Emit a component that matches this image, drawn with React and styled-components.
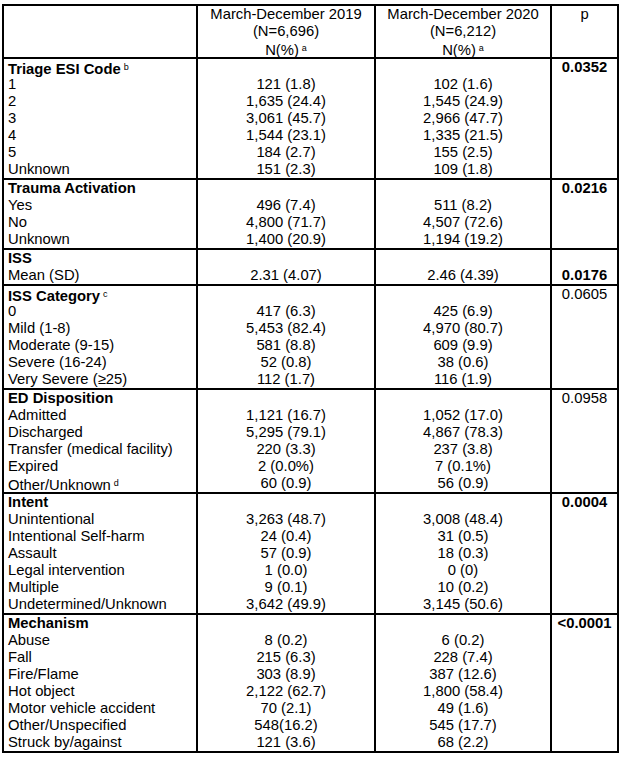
import styled, { createGlobalStyle } from "styled-components";

const GlobalStyle = createGlobalStyle`
  html, body {
    margin: 0;
    padding: 0;
    background: #fff;
  }
  body {
    font-family: "Liberation Sans", Arial, sans-serif;
    color: #000;
  }
`;

const Table = styled.div`
  display: grid;
  grid-template-columns: 194px 178px 176px 67px;
  margin: 4px 0 0 2px;
  border-left: 2px solid #000;
  border-top: 2px solid #000;
  width: max-content;
  font-size: 14.8px;
  line-height: 17px;
`;

const Cell = styled.div`
  border-right: 2px solid #000;
  border-bottom: 2px solid #000;
  padding: 0 4px;
  text-align: ${(p) => p.$align || "center"};
  white-space: nowrap;
`;

const Line = styled.div`
  height: 17px;
  font-weight: ${(p) => (p.$bold ? 700 : 400)};
`;

const Sup = styled.span`
  font-size: 9px;
  vertical-align: 4px;
  margin-left: 3px;
  font-weight: 400;
`;

const sections = [
  {
    title: "Triage ESI Code",
    sup: "b",
    p: "0.0352",
    bold: true,
    rows: [
      ["1", "121 (1.8)", "102 (1.6)"],
      ["2", "1,635 (24.4)", "1,545 (24.9)"],
      ["3", "3,061 (45.7)", "2,966 (47.7)"],
      ["4", "1,544 (23.1)", "1,335 (21.5)"],
      ["5", "184 (2.7)", "155 (2.5)"],
      ["Unknown", "151 (2.3)", "109 (1.8)"],
    ],
  },
  {
    title: "Trauma Activation",
    p: "0.0216",
    bold: true,
    rows: [
      ["Yes", "496 (7.4)", "511 (8.2)"],
      ["No", "4,800 (71.7)", "4,507 (72.6)"],
      ["Unknown", "1,400 (20.9)", "1,194 (19.2)"],
    ],
  },
  {
    title: "ISS",
    p: "0.0176",
    bold: true,
    pLine: 1,
    rows: [["Mean (SD)", "2.31 (4.07)", "2.46 (4.39)"]],
  },
  {
    title: "ISS Category",
    sup: "c",
    p: "0.0605",
    rows: [
      ["0", "417 (6.3)", "425 (6.9)"],
      ["Mild (1-8)", "5,453 (82.4)", "4,970 (80.7)"],
      ["Moderate (9-15)", "581 (8.8)", "609 (9.9)"],
      ["Severe (16-24)", "52 (0.8)", "38 (0.6)"],
      ["Very Severe (≥25)", "112 (1.7)", "116 (1.9)"],
    ],
  },
  {
    title: "ED Disposition",
    p: "0.0958",
    rows: [
      ["Admitted", "1,121 (16.7)", "1,052 (17.0)"],
      ["Discharged", "5,295 (79.1)", "4,867 (78.3)"],
      ["Transfer (medical facility)", "220 (3.3)", "237 (3.8)"],
      ["Expired", "2 (0.0%)", "7 (0.1%)"],
      ["Other/Unknown", "60 (0.9)", "56 (0.9)", "d"],
    ],
  },
  {
    title: "Intent",
    p: "0.0004",
    bold: true,
    rows: [
      ["Unintentional", "3,263 (48.7)", "3,008 (48.4)"],
      ["Intentional Self-harm", "24 (0.4)", "31 (0.5)"],
      ["Assault", "57 (0.9)", "18 (0.3)"],
      ["Legal intervention", "1 (0.0)", "0 (0)"],
      ["Multiple", "9 (0.1)", "10 (0.2)"],
      ["Undetermined/Unknown", "3,642 (49.9)", "3,145 (50.6)"],
    ],
  },
  {
    title: "Mechanism",
    p: "<0.0001",
    bold: true,
    rows: [
      ["Abuse", "8 (0.2)", "6 (0.2)"],
      ["Fall", "215 (6.3)", "228 (7.4)"],
      ["Fire/Flame", "303 (8.9)", "387 (12.6)"],
      ["Hot object", "2,122 (62.7)", "1,800 (58.4)"],
      ["Motor vehicle accident", "70 (2.1)", "49 (1.6)"],
      ["Other/Unspecified", "548(16.2)", "545 (17.7)"],
      ["Struck by/against", "121 (3.6)", "68 (2.2)"],
    ],
  },
];

function Section({ s }) {
  const pLine = s.pLine || 0;
  return (
    <>
      <Cell $align="left">
        <Line $bold>
          {s.title}
          {s.sup && <Sup>{s.sup}</Sup>}
        </Line>
        {s.rows.map((r) => (
          <Line key={r[0]}>
            {r[0]}
            {r[3] && <Sup>{r[3]}</Sup>}
          </Line>
        ))}
      </Cell>
      {[1, 2].map((c) => (
        <Cell key={c}>
          <Line />
          {s.rows.map((r) => (
            <Line key={r[0]}>{r[c]}</Line>
          ))}
        </Cell>
      ))}
      <Cell>
        {Array.from({ length: pLine }).map((_, i) => (
          <Line key={i} />
        ))}
        <Line $bold={s.bold}>{s.p}</Line>
      </Cell>
    </>
  );
}

export default function App() {
  return (
    <>
      <GlobalStyle />
      <Table>
        <Cell />
        <Cell>
          <Line>March-December 2019</Line>
          <Line>(N=6,696)</Line>
          <Line>
            N(%)<Sup>a</Sup>
          </Line>
        </Cell>
        <Cell>
          <Line>March-December 2020</Line>
          <Line>(N=6,212)</Line>
          <Line>
            N(%)<Sup>a</Sup>
          </Line>
        </Cell>
        <Cell>
          <Line>p</Line>
        </Cell>
        {sections.map((s) => (
          <Section key={s.title} s={s} />
        ))}
      </Table>
    </>
  );
}
